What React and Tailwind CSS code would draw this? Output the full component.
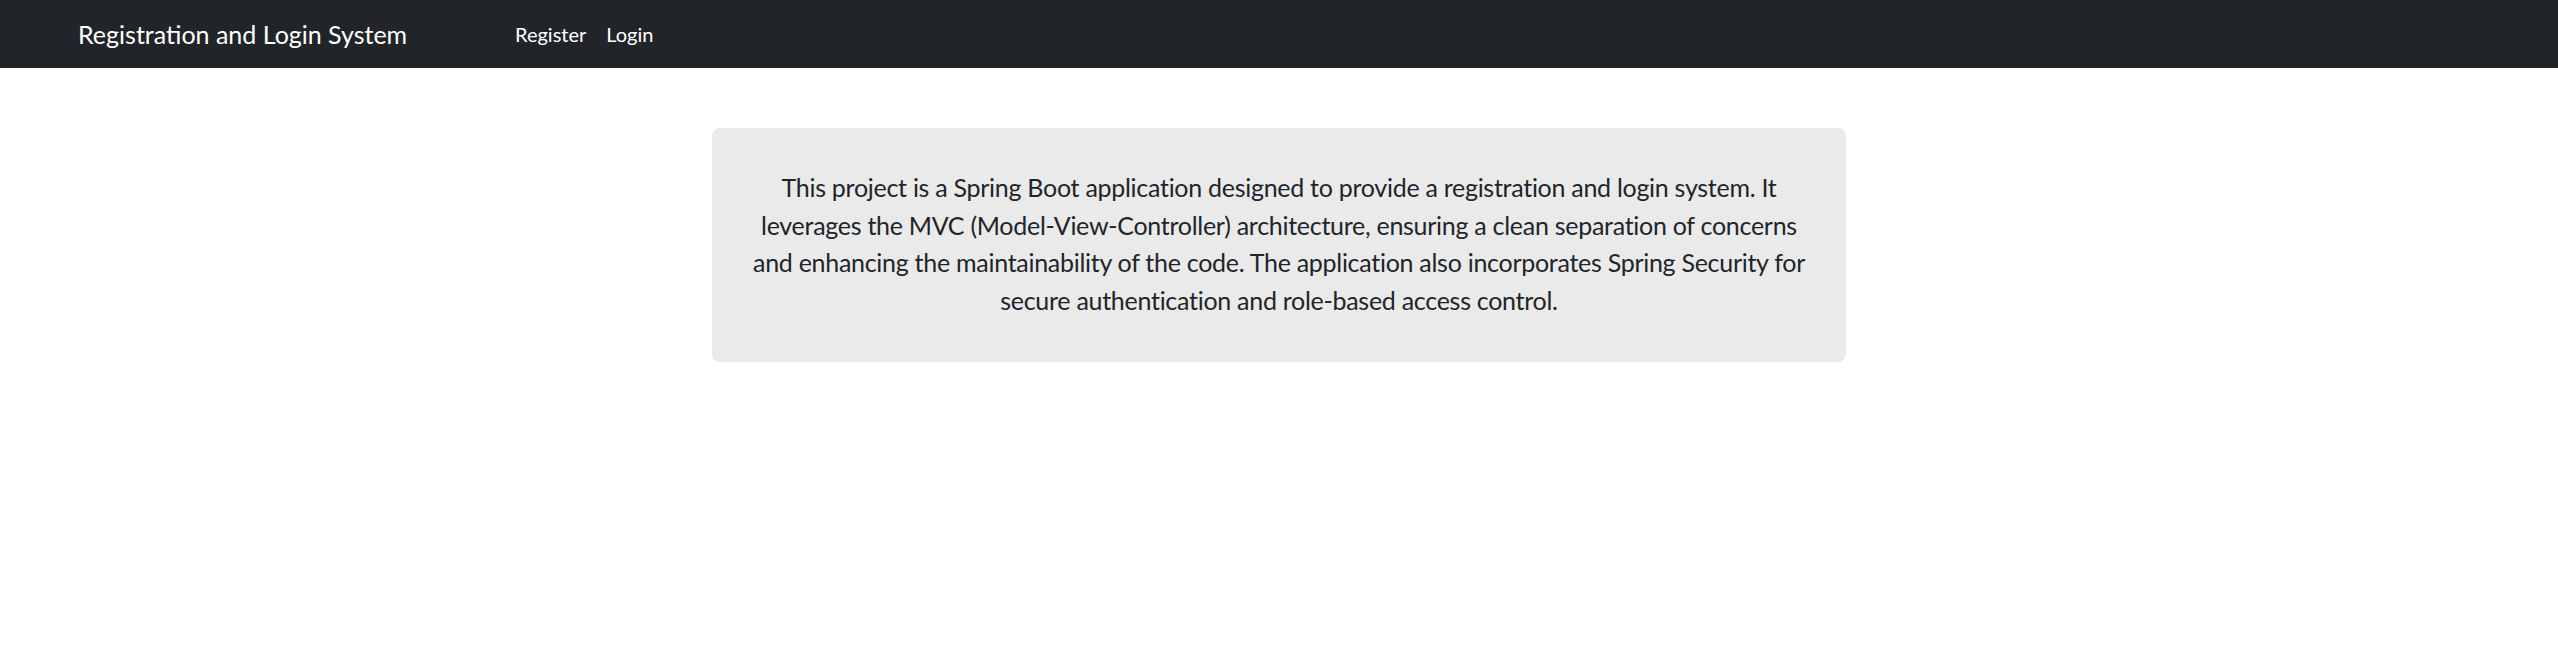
export default function App() {
  const lines = [
    'This project is a Spring Boot application designed to provide a registration and login system. It',
    'leverages the MVC (Model-View-Controller) architecture, ensuring a clean separation of concerns',
    'and enhancing the maintainability of the code. The application also incorporates Spring Security for',
    'secure authentication and role-based access control.',
  ]

  return (
    <div className="min-h-screen bg-white text-[#212529] font-['Lato','Noto_Sans',sans-serif]">
      {/* barre de navigation */}
      <nav className="flex h-[68px] items-center bg-[#212529] pl-[78px]">
        <a href="#" className="w-[427px] text-[25px] leading-[30px] text-white">
          Registration and Login System
        </a>
        <ul className="flex items-center text-[20px] leading-[30px] text-white">
          <li>
            <a href="#" className="block px-[10px]">Register</a>
          </li>
          <li>
            <a href="#" className="block px-[10px]">Login</a>
          </li>
        </ul>
      </nav>

      <main className="pt-[60px]">
        <div className="mx-auto w-[1134px] rounded-[8px] bg-[#eaeaea] px-[40px] pt-[41px] pb-[43px] text-center text-[25px] leading-[37.5px] tracking-[-0.28px]">
          {lines.map((l) => (
            <p key={l} className="whitespace-nowrap">{l}</p>
          ))}
        </div>
      </main>
    </div>
  )
}
